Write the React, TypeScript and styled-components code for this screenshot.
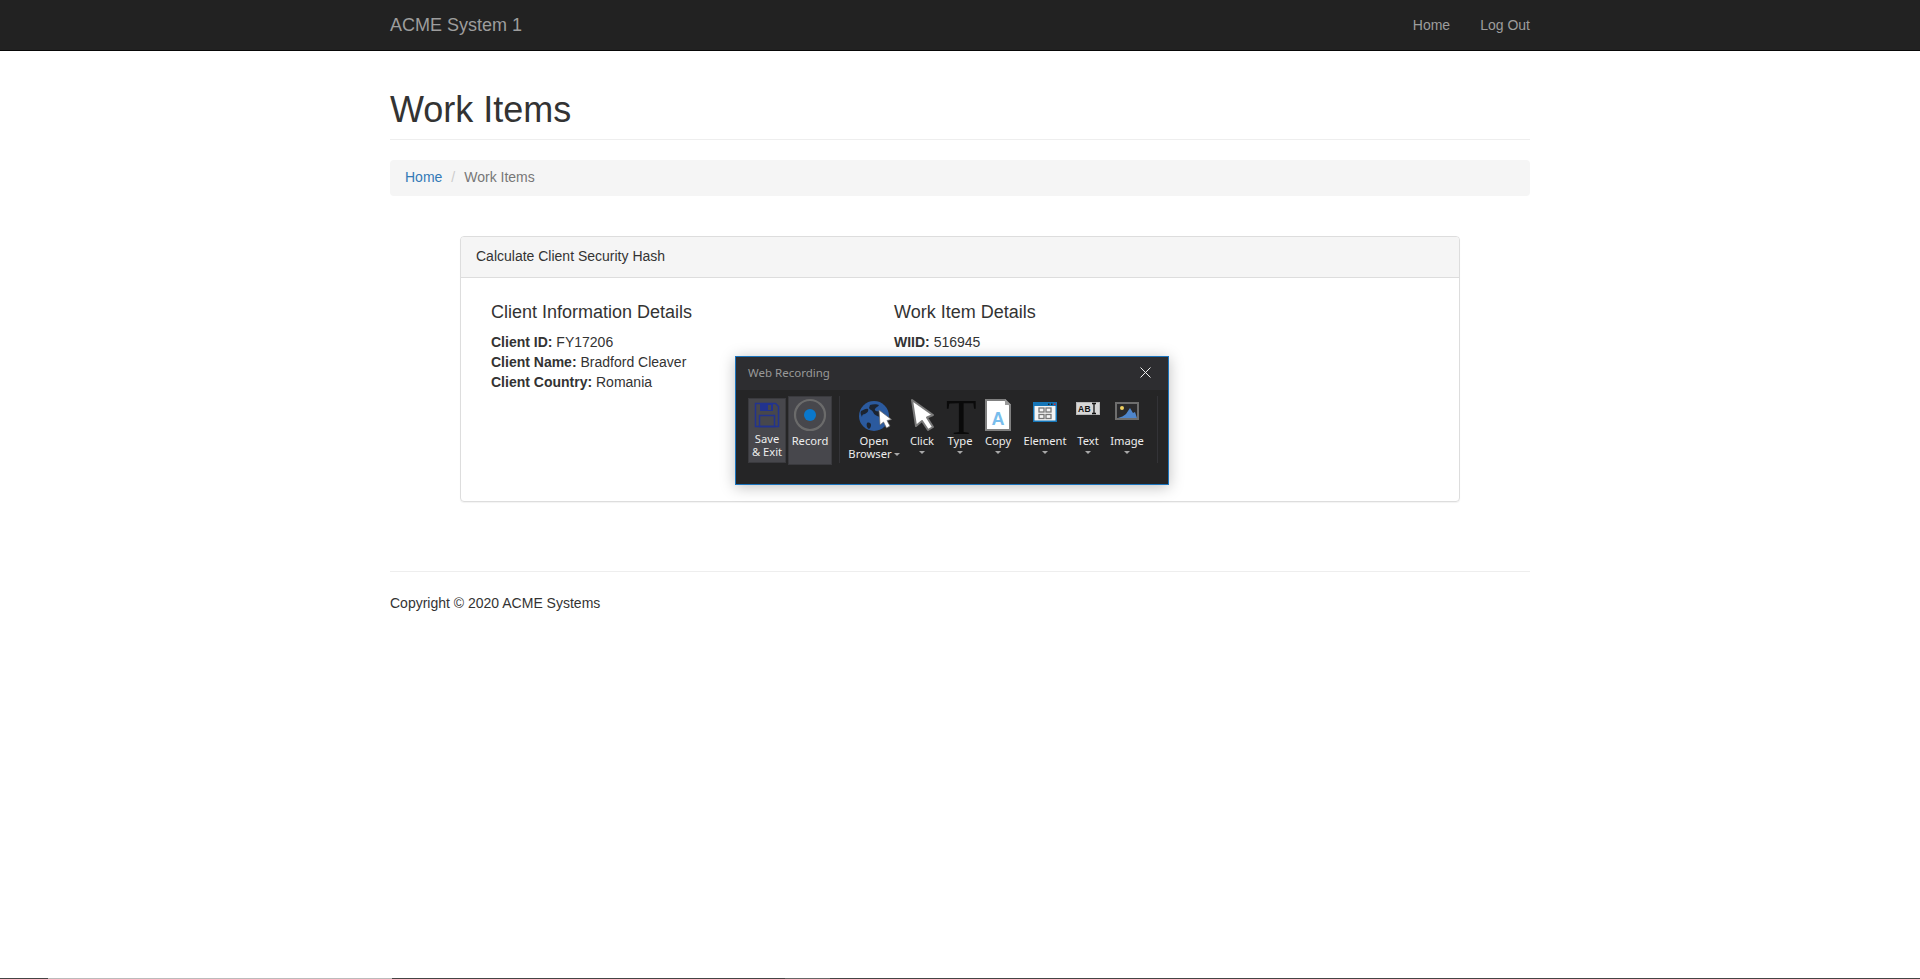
import React from "react";
import styled, { createGlobalStyle } from "styled-components";

const Global = createGlobalStyle`
  html, body { margin: 0; padding: 0; height: 100%; overflow: hidden; background: #fff; }
  body { font-family: "Liberation Sans", Arial, sans-serif; font-size: 14px; line-height: 20px; color: #333; }
`;

const Navbar = styled.nav`
  height: 50px; background: #222; border-bottom: 1px solid #080808;
`;
const Container = styled.div`
  width: 1140px; margin: 0 auto;
`;
const NavInner = styled(Container)`
  display: flex; align-items: center; justify-content: space-between; height: 50px;
`;
const Brand = styled.a`
  font-size: 18px; color: #9d9d9d;
`;
const NavLinks = styled.div`
  display: flex; gap: 30px;
`;
const NavLink = styled.a`
  color: #9d9d9d;
`;
const PageHeader = styled.div`
  margin: 39px 0 20px; padding-bottom: 9px; border-bottom: 1px solid #eee;
`;
const Title = styled.h1`
  margin: 0; font-size: 36px; line-height: 40px; font-weight: 500; color: #333;
`;
const Breadcrumb = styled.div`
  display: flex; background: #f5f5f5; border-radius: 4px; padding: 7px 15px 9px; margin-bottom: 40px;
`;
const Crumb = styled.a`
  color: #337ab7;
`;
const CrumbSep = styled.span`
  color: #ccc; padding: 0 9px 0 9px;
`;
const CrumbActive = styled.span`
  color: #777;
`;
const Panel = styled.section`
  width: 1000px; height: 266px; margin: 0 auto; box-sizing: border-box;
  border: 1px solid #ddd; border-radius: 4px; box-shadow: 0 1px 1px rgba(0,0,0,.05);
`;
const PanelHeading = styled.div`
  background: #f5f5f5; border-bottom: 1px solid #ddd; padding: 9px 15px 11px;
  border-radius: 3px 3px 0 0;
`;
const PanelBody = styled.div`
  padding: 14px 15px 15px; display: grid; grid-template-columns: 403px 1fr;
`;
const Col = styled.div`
  padding: 0 15px;
`;
const Heading = styled.h4`
  margin: 10px 0; font-size: 18px; line-height: 20px; font-weight: 500; color: #333;
`;
const Line = styled.div`
  height: 20px;
`;
const Rule = styled.hr`
  border: 0; border-top: 1px solid #eee; margin: 69px 0 0;
`;
const Footer = styled.footer`
  margin-top: 21px;
`;

const RecWindow = styled.div`
  position: absolute; left: 735px; top: 356px; width: 434px; height: 129px; box-sizing: border-box;
  border: 1px solid #1b74bd; background: #252526; box-shadow: 0 2px 14px rgba(0,0,0,.25);
  font-family: "Noto Sans", "Open Sans", sans-serif; color: #f0f0f0;
`;
const RecTitle = styled.div`
  height: 33px; background: #2d2d30; display: flex; align-items: center; justify-content: space-between;
  padding: 0 16px 2px 12px; box-sizing: border-box; font-size: 11.5px; color: #999;
`;
const CloseButton = styled.svg`
  width: 13px; height: 13px; display: block;
`;
const RecBar = styled.div`
  display: flex; align-items: flex-start; padding: 6px 0 0 12px;
`;
const ModeButton = styled.div<{ $w: number; $h: number; $mt: number }>`
  width: ${p => p.$w}px; height: ${p => p.$h}px; margin-top: ${p => p.$mt}px; box-sizing: border-box;
  background: #47474c; border: 1px solid #3a3a3e;
  display: flex; flex-direction: column; align-items: center; margin-right: 2px;
`;
const Divider = styled.div<{ $ml: number; $mr: number }>`
  width: 1px; height: 67px; background: #333337; margin: 0 ${p => p.$mr}px 0 ${p => p.$ml}px;
`;
const Tool = styled.div<{ $w: number }>`
  width: ${p => p.$w}px; display: flex; flex-direction: column; align-items: center;
`;
const IconSvg = styled.svg`
  display: block; flex: none;
`;
const TypeGlyph = styled.div`
  height: 38px; width: 28px; flex: none; font-family: "Liberation Serif", serif; font-size: 50px; line-height: 42px;
  color: #0a0a0a; text-align: center; overflow: visible;
`;
const ToolLabel = styled.div`
  font-size: 11.2px; line-height: 13px; text-align: center; white-space: nowrap; color: #ededed;
`;
const Caret = styled.span<{ $inline?: boolean }>`
  display: ${p => (p.$inline ? "inline-block" : "block")};
  width: 0; height: 0; border-left: 3.5px solid transparent; border-right: 3.5px solid transparent;
  border-top: 3.5px solid #a8a8a8;
  margin: ${p => (p.$inline ? "0 0 1px 2px" : "4px auto 0")};
  vertical-align: middle;
`;
const TaskStrip = styled.div`
  position: fixed; left: 0; right: 0; bottom: 0; height: 1px; display: flex; background: #444;
`;
const StripPart = styled.div<{ $w: number; $c: string }>`
  width: ${p => p.$w}px; background: ${p => p.$c}; flex: none;
`;

const SaveIcon = () => (
  <IconSvg width="36" height="33" viewBox="0 0 36 33">
    <path d="M6.500 4.500h20l3 3v20h-23z" fill="none" stroke="#22338f" strokeWidth="1.500" />
    <rect x="11" y="5" width="13" height="7" fill="#22338f" />
    <rect x="19" y="6" width="3" height="5" fill="#47474c" />
    <rect x="10.500" y="16.500" width="15" height="11" fill="none" stroke="#22338f" strokeWidth="1.500" />
  </IconSvg>
);
const RecordIcon = () => (
  <IconSvg width="42" height="37" viewBox="0 0 42 37">
    <circle cx="21" cy="18" r="15" fill="none" stroke="#6b6b6b" strokeWidth="2.200" />
    <circle cx="21" cy="18" r="6" fill="#0a78cc" />
  </IconSvg>
);
const GlobeIcon = () => (
  <IconSvg width="48" height="38" viewBox="0 0 48 38">
    <circle cx="24" cy="20" r="15" fill="#2b5a9e" />
    <path d="M11 15c3-1 5-3 7-2 1 2-1 4-3 5-2 0-3 1-3 3-1-2-2-4-1-6zM20 9c3-1 7-1 9 0-1 2-3 2-4 4-1 2 3 3 5 2 2 2 1 4 0 6-3-1-6-2-7-5-1-2-3-2-4-4z" fill="#1c2430" />
    <path d="M17 27c2-1 4 0 4 2s-1 3-2 4c-2-1-3-4-2-6z" fill="#1c2430" />
    <path d="M29 14l1 15 3.500-3 3 6 3.500-2-3-5.500 4.500-1z" fill="#fff" stroke="#666" strokeWidth=".7" strokeLinejoin="round" />
  </IconSvg>
);
const ClickIcon = () => (
  <IconSvg width="48" height="38" viewBox="0 0 48 38">
    <path d="M14 4l4 26 6-5 6 9 5-3-6-9.500 6-2.500z" fill="#fff" stroke="#7a7a7a" strokeWidth="2" strokeLinejoin="round" />
  </IconSvg>
);
const CopyIcon = () => (
  <IconSvg width="48" height="38" viewBox="0 0 48 38">
    <path d="M12 4h19l5 5v25H12z" fill="#fff" stroke="#808080" strokeWidth="2" />
    <path d="M31 3l6 6h-6z" fill="#9a9a9a" />
    <text x="24" y="29" textAnchor="middle" fontFamily="Liberation Sans, sans-serif" fontWeight="700" fontSize="18" fill="#79bdec">A</text>
  </IconSvg>
);
const ElementIcon = () => (
  <IconSvg width="46" height="38" viewBox="0 0 46 38">
    <rect x="11" y="6" width="24" height="20" fill="#1576b8" />
    <rect x="12.500" y="10" width="21" height="14.500" fill="#f4f4f4" />
    <rect x="26" y="7.500" width="1.500" height="1.500" fill="#222" />
    <rect x="29" y="7.500" width="1.500" height="1.500" fill="#222" />
    <rect x="32" y="7.500" width="1.500" height="1.500" fill="#d8262c" />
    <g fill="none" stroke="#777" strokeWidth="1.300">
      <rect x="17" y="12" width="5" height="4" />
      <rect x="24" y="12" width="5" height="4" />
      <rect x="17" y="18.500" width="5" height="4" />
      <rect x="24" y="18.500" width="5" height="4" />
    </g>
  </IconSvg>
);
const TextIcon = () => (
  <IconSvg width="40" height="38" viewBox="0 0 40 38">
    <rect x="8" y="6" width="24" height="13" fill="#b9b9b9" />
    <rect x="9" y="7" width="22" height="11" fill="#d6d6d6" />
    <text x="10" y="16" fontFamily="Liberation Sans, sans-serif" fontWeight="700" fontSize="8.500" letterSpacing=".4" fill="#111">AB</text>
    <path d="M24 7.500h4M26 7.500v10M24 17.500h4" stroke="#111" strokeWidth="1.300" fill="none" />
  </IconSvg>
);
const ImageIcon = () => (
  <IconSvg width="38" height="38" viewBox="0 0 38 38">
    <rect x="8" y="7" width="22" height="16" fill="#2a2a2c" stroke="#6e6e6e" strokeWidth="2" />
    <circle cx="14" cy="12" r="2" fill="#f0d060" />
    <path d="M10 22c3-1 6-2 8-4l4-6 3 5 2-1 2 6z" fill="#4f86cc" />
  </IconSvg>
);

const tools = [
  { label: "Click", w: 48, icon: <ClickIcon /> },
  { label: "Type", w: 28, icon: <TypeGlyph>T</TypeGlyph> },
  { label: "Copy", w: 48, icon: <CopyIcon /> },
  { label: "Element", w: 46, icon: <ElementIcon /> },
  { label: "Text", w: 40, icon: <TextIcon /> },
  { label: "Image", w: 38, icon: <ImageIcon /> },
];

export default function App() {
  return (
    <>
      <Global />
      <Navbar>
        <NavInner>
          <Brand>ACME System 1</Brand>
          <NavLinks>
            <NavLink>Home</NavLink>
            <NavLink>Log Out</NavLink>
          </NavLinks>
        </NavInner>
      </Navbar>
      <Container>
        <PageHeader>
          <Title>Work Items</Title>
        </PageHeader>
        <Breadcrumb>
          <Crumb>Home</Crumb>
          <CrumbSep>/</CrumbSep>
          <CrumbActive>Work Items</CrumbActive>
        </Breadcrumb>
        <Panel>
          <PanelHeading>Calculate Client Security Hash</PanelHeading>
          <PanelBody>
            <Col>
              <Heading>Client Information Details</Heading>
              <Line><b>Client ID:</b> FY17206</Line>
              <Line><b>Client Name:</b> Bradford Cleaver</Line>
              <Line><b>Client Country:</b> Romania</Line>
            </Col>
            <Col>
              <Heading>Work Item Details</Heading>
              <Line><b>WIID:</b> 516945</Line>
            </Col>
          </PanelBody>
        </Panel>
        <Rule />
        <Footer>Copyright © 2020 ACME Systems</Footer>
      </Container>

      <RecWindow>
        <RecTitle>
          Web Recording
          <CloseButton viewBox="0 0 13 13">
            <path d="M1.500 1.500l10 10M11.500 1.500l-10 10" stroke="#f0f0f0" strokeWidth="1" fill="none" />
          </CloseButton>
        </RecTitle>
        <RecBar>
          <ModeButton $w={38} $h={65} $mt={2}>
            <SaveIcon />
            <ToolLabel>Save<br />&amp; Exit</ToolLabel>
          </ModeButton>
          <ModeButton $w={44} $h={69} $mt={0}>
            <RecordIcon />
            <ToolLabel>Record</ToolLabel>
          </ModeButton>
          <Divider $ml={5} $mr={10} />
          <Tool $w={48}>
            <GlobeIcon />
            <ToolLabel>Open<br />Browser<Caret $inline /></ToolLabel>
          </Tool>
          {tools.map(t => (
            <Tool key={t.label} $w={t.w}>
              {t.icon}
              <ToolLabel>{t.label}</ToolLabel>
              <Caret />
            </Tool>
          ))}
          <Divider $ml={11} $mr={0} />
        </RecBar>
      </RecWindow>

      <TaskStrip>
        <StripPart $w={48} $c="#444" />
        <StripPart $w={344} $c="#bbb" />
        <StripPart $w={393} $c="#444" />
        <StripPart $w={45} $c="#666" />
      </TaskStrip>
    </>
  );
}
